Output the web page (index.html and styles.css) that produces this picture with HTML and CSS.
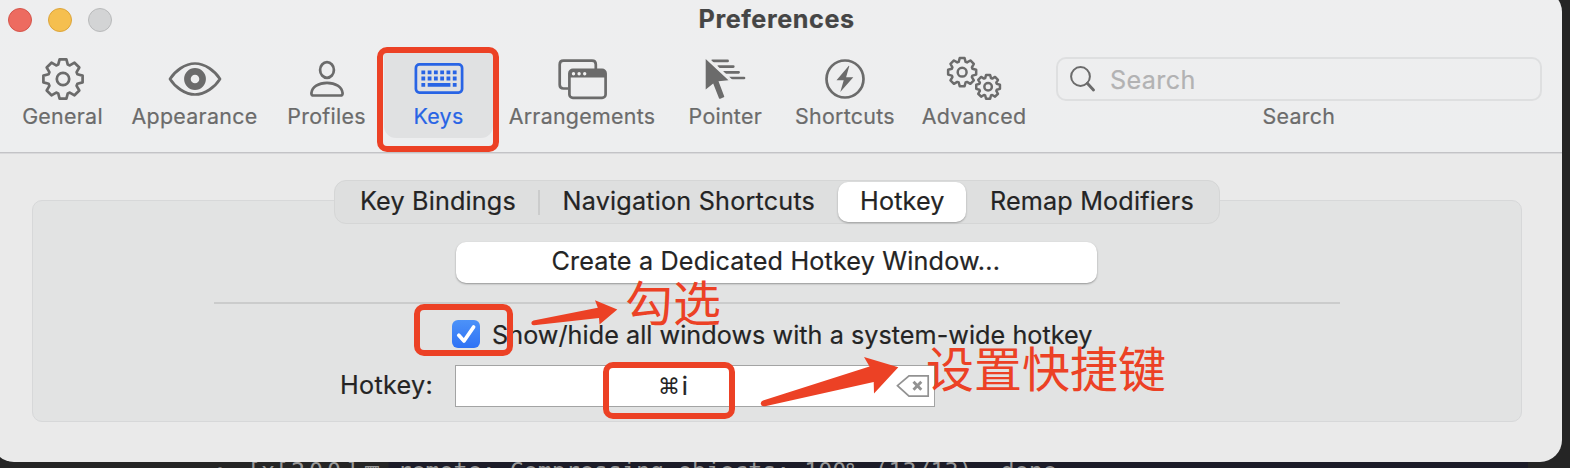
FILE: index.html
```html
<!DOCTYPE html>
<html lang="en">
<head>
<meta charset="utf-8">
<title>Preferences</title>
<link rel="stylesheet" href="styles.css">
</head>
<body>
<svg class="defs" width="0" height="0" aria-hidden="true">
  <symbol id="gear" viewBox="-22 -22 44 44" overflow="visible">
    <path vector-effect="non-scaling-stroke" d="M-4.8-14.4L-3.4-19.6H3.4L4.8-14.4 6.8-13.6 11.5-16.3 16.3-11.5 13.6-6.8 14.4-4.8 19.6-3.4V3.4L14.4 4.8 13.6 6.8 16.3 11.5 11.5 16.3 6.8 13.6 4.8 14.4 3.4 19.6H-3.4L-4.8 14.4-6.8 13.6-11.5 16.3-16.3 11.5-13.6 6.8-14.4 4.8-19.6 3.4V-3.4L-14.4-4.8-13.6-6.8-16.3-11.5-11.5-16.3-6.8-13.6Z"/>
    <circle vector-effect="non-scaling-stroke" r="6.2"/>
  </symbol>
</svg>

<div class="window">
  <header class="titlebar">
    <div class="lights"><i class="light close"></i><i class="light minimize"></i><i class="light zoom"></i></div>
    <h1 class="title">Preferences</h1>
  </header>

  <nav class="toolbar">
    <div class="item general">
      <svg class="icon" viewBox="-28 -24 56 48"><use href="#gear" x="-22" y="-22" width="44" height="44"/></svg>
      <span class="label">General</span>
    </div>
    <div class="item">
      <svg class="icon" viewBox="-28 -24 56 48"><path d="M-25 0C-20-8-10-15.5 0-15.5S20-8 25 0C20 8 10 15.5 0 15.5S-20 8-25 0Z"/><circle class="iris" r="7.6"/></svg>
      <span class="label">Appearance</span>
    </div>
    <div class="item">
      <svg class="icon" viewBox="-28 -24 56 48"><ellipse cy="-9" rx="6.9" ry="7.8"/><path d="M-13.5 16.5H13.5Q15.6 16.5 15.6 14.2C15 8 8.5 3.9 0 3.9S-15 8-15.6 14.2Q-15.6 16.5-13.5 16.5Z"/></svg>
      <span class="label">Profiles</span>
    </div>
    <div class="item selected">
      <svg class="icon" viewBox="-28 -24 56 48"><rect x="-23.1" y="-14.6" width="46.2" height="28.2" rx="3.5"/><path class="keycaps" stroke-dasharray="3.8 2.48" d="M-17.6-6.7H17.7M-17.6-.5H17.7"/><path class="keycaps" d="M-17.6 5.8h3.8M-11.3 5.8h22.7M13.8 5.8h3.8"/></svg>
      <span class="label">Keys</span>
    </div>
    <div class="item">
      <svg class="icon" viewBox="-28 -24 56 48"><path d="M-14 9.5H-18.5Q-22.3 9.5-22.3 5.7V-14.5Q-22.3-18.3-18.5-18.3H10Q13.8-18.3 13.8-14.5V-10"/><rect x="-12.6" y="-9.1" width="36.2" height="28" rx="3.5"/><path class="solid" d="M-12-7Q-12-9-10-9H21Q23-9 23-7V-1.5H-12Z"/><path class="dots" d="M-8.5-5.3h.01M-2.9-5.3h.01M2.7-5.3h.01"/></svg>
      <span class="label">Arrangements</span>
    </div>
    <div class="item">
      <svg class="icon" viewBox="-28 -24 56 48"><path class="solid" d="M-19.3-20L3.5 1.3-6.5 2.3-.8 17.2Q-.6 18-1.3 18.3L-4.7 19.8Q-5.6 20-6 19.2L-11.8 4.5-19.3 10.5Z"/><path stroke-linecap="round" d="M-12.5-18.1H2.6M-6.5-12.4H8.3M-.8-6.7H13.6M4.8-1H19"/><path class="halo" d="M-17.7-21L7.8 2.5"/></svg>
      <span class="label">Pointer</span>
    </div>
    <div class="item">
      <svg class="icon" viewBox="-28 -24 56 48"><circle r="18.5"/><path class="solid" d="M3.8-13.3L-8.5 1.2H-1.3L-4.7 13 8.3-1.8H1.1L4.3-13Z"/></svg>
      <span class="label">Shortcuts</span>
    </div>
    <div class="item">
      <svg class="icon thin" viewBox="-28 -24 56 48"><use href="#gear" x="-27.6" y="-22.6" width="31.5" height="31.5"/><use href="#gear" x=".8" y="-5.5" width="26.6" height="26.6"/></svg>
      <span class="label">Advanced</span>
    </div>
    <div class="search">
      <div class="searchbox">
        <svg class="lens" viewBox="0 0 28 30"><circle cx="11.5" cy="11.5" r="9.4"/><path stroke-width="2.9" d="M18.3 18.3L24.5 25"/></svg>
        <span class="placeholder">Search</span>
      </div>
      <span class="label">Search</span>
    </div>
  </nav>

  <main class="content">
    <div class="tabs">
      <span class="tab bindings">Key Bindings</span>
      <span class="tab navigation">Navigation Shortcuts</span>
      <span class="tab active">Hotkey</span>
      <span class="tab remap">Remap Modifiers</span>
    </div>
    <section class="panel">
      <div class="create">Create a Dedicated Hotkey Window...</div>
      <div class="rule"></div>
      <div class="check-row">
        <svg class="checkbox" viewBox="0 0 28 28"><path d="M6.8 15.3L12 21 21.6 7"/></svg>
        <span>Show/hide all windows with a system-wide hotkey</span>
      </div>
      <div class="field-row">
        <span class="field-label">Hotkey:</span>
        <div class="field">
          <span class="keys"><span class="command">⌘</span>i</span>
          <svg class="clear" viewBox="0 0 34 24"><path stroke-width="1.7" d="M1.5 11.7L13 1.9H32.2V22.1H13Z"/><path stroke-width="2.9" d="M17.5 7.8L25.3 15.8M25.3 7.8L17.5 15.8"/></svg>
        </div>
      </div>
    </section>
  </main>
</div>

<div class="terminal"><span class="bullet">•</span><span class="host">[x[</span><span class="count">200]</span><span class="cell">▥</span><span class="dash">-</span><span>remote: Compressing objects: 100% (13/13), done.</span></div>

<div class="mark mark-keys"></div>
<div class="mark mark-check"></div>
<div class="mark mark-hotkey"></div>
<svg class="arrows" viewBox="0 0 1570 468">
  <path d="M533.5 320.5L597.8 307.7 595 300.3 617.3 309.5 599.5 324.5 599 318 534 325.2Q531.5 325.3 531.3 323 531.4 321 533.5 320.5Z"/>
  <path d="M763 400.5L869.5 366.6 864 357 898.3 367.2 874 393.6 873.7 382 765 406.2Q761.3 406.8 760.7 403.8 760.7 401.3 763 400.5Z"/>
</svg>
<div class="note note-check" lang="zh-CN">勾选</div>
<div class="note note-hotkey" lang="zh-CN">设置快捷键</div>
</body>
</html>
```
FILE: styles.css
```css
* { box-sizing: border-box; }

body {
  margin: 0;
  height: 468px;
  overflow: hidden;
  position: relative;
  background: #252525;
  font: 25.2px/30px Inter, "Liberation Sans", sans-serif;
  letter-spacing: .16px;
  color: #242424;
  white-space: nowrap;
  -webkit-text-stroke: .2px;
}

.defs { position: absolute; }

/* The window is larger than the viewport on its top and left edges. */
.window {
  display: flex;
  flex-direction: column;
  width: 1570px;
  height: 472px;
  margin: -10px 0 0 -8px;
  padding: 10px 0 0 8px;
  border-radius: 22px;
  background: linear-gradient(#eeeeef 0, #edeeef 162px, #eaeaea 163px);
}

.titlebar {
  display: grid;
  grid-template-columns: 690px auto;
  height: 40px;
}

.lights {
  display: flex;
  gap: 16px;
  padding: 8px;
}

.light {
  width: 24px;
  height: 24px;
  border: 1px solid;
  border-radius: 50%;
}

.close { background: #ed6b60; border-color: #d5554b; }
.minimize { background: #f5bf4f; border-color: #dda53b; }
.zoom { background: #d3d4d5; border-color: #b9babb; }

.title {
  margin: 4px 0 0 8.5px;
  font-size: 25.2px;
  line-height: 30px;
  font-weight: 700;
  letter-spacing: .6px;
  color: #454545;
}

.toolbar {
  display: grid;
  grid-template-columns: 105px 159px 105px 114px 178px 108.6px 130.8px 127.2px auto;
  height: 113px;
  padding: 13px 0 0 10px;
  border-bottom: 1px solid #c3c3c6;
  box-shadow: 0 1px #d9d9db;
}

.item {
  display: flex;
  flex-direction: column;
  align-items: center;
  height: 85px;
  padding-top: 2px;
  color: #6b6b6b;
}

.selected {
  margin: 0 0 0 5px;
  width: 109px;
  border-radius: 0 0 12px 12px;
  background: #e0e1e2;
  color: #2864e5;
}

.icon {
  width: 56px;
  height: 48px;
  flex: none;
  overflow: visible;
  fill: none;
  stroke: currentColor;
  stroke-width: 2.7px;
  stroke-linejoin: round;
}

.icon .keycaps { stroke-width: 3.8px; }
.icon .iris { stroke-width: 6.6px; }
.icon .solid { fill: currentColor; stroke: none; }
.icon .dots { stroke: #f2f2f2; stroke-width: 3.4px; stroke-linecap: round; }
.icon .halo { stroke: #edeeee; stroke-width: 2px; }
.icon.thin { stroke-width: 2.5px; }

.label {
  font-size: 21.4px;
  line-height: 26px;
  letter-spacing: .28px;
}

.search {
  display: flex;
  flex-direction: column;
  align-items: center;
  gap: 2px;
  width: 485.5px;
  margin: 4px 0 0 18.5px;
  color: #6b6b6b;
}

.searchbox {
  display: flex;
  align-items: center;
  width: 485.5px;
  height: 44px;
  border: 2px solid #dedfe0;
  border-radius: 10px;
  padding-left: 11px;
}

.lens {
  width: 28px;
  height: 30px;
  margin-top: 2px;
  fill: none;
  stroke: #6b6b6b;
  stroke-width: 2px;
  stroke-linecap: round;
}

.placeholder {
  margin: 1px 0 0 13px;
  letter-spacing: .35px;
  color: #b2b2b3;
}

.content {
  display: flex;
  flex-direction: column;
  padding: 27px 40px 0 32px;
}

.tabs {
  z-index: 1;
  display: flex;
  align-items: center;
  width: 886px;
  height: 44px;
  margin-left: 302px;
  border: 1px solid #d5d6d6;
  border-radius: 12px;
  background: #dedfdf;
}

.tab { height: 25px; line-height: 23px; }
.bindings { width: 205px; padding-left: 25px; border-right: 2px solid #cbcccc; }
.navigation { width: 298px; padding-left: 22.5px; letter-spacing: .2px; }

.active {
  width: 128px;
  height: 40px;
  padding: 8px 0 0 22px;
  border-radius: 10px;
  background: #fff;
  box-shadow: 0 1px 2px #0000004d;
}

.remap { padding-left: 24px; }

.panel {
  width: 1490px;
  height: 222px;
  margin-top: -24px;
  padding-top: 41px;
  border: 1px solid #d7d8d9;
  border-radius: 10px;
  background: #e2e3e3;
}

.create {
  width: 641px;
  height: 41px;
  margin-left: 422.5px;
  padding: 4px 0 0 96px;
  border-radius: 10px;
  background: #fff;
  box-shadow: 0 1px 2px #00000059;
}

.rule {
  width: 1126px;
  height: 2px;
  margin: 19px 0 0 181px;
  background: #cbcccc;
}

.check-row {
  display: flex;
  gap: 12px;
  height: 30px;
  margin: 16px 0 0 419px;
  letter-spacing: .04px;
}

.checkbox {
  width: 28px;
  height: 28px;
  margin-top: 0;
  border-radius: 6px;
  background: linear-gradient(#4c92f8, #2f72f5);
  fill: none;
  stroke: #fff;
  stroke-width: 3.7px;
  stroke-linecap: round;
  stroke-linejoin: round;
}

.field-row {
  display: flex;
  margin: 15px 0 0 307px;
}

.field-label { width: 115px; padding-top: 4.5px; letter-spacing: .29px; }

.field {
  display: flex;
  justify-content: space-between;
  align-items: center;
  width: 480px;
  height: 42px;
  padding: 0 4px 0 202px;
  border: 1px solid #a3a4a4;
  background: #fff;
}

.keys { display: flex; gap: 1.5px; }
.command { font: 22px/31px "DejaVu Sans", sans-serif; -webkit-text-stroke: 0; }
.clear { width: 34px; height: 24px; fill: none; stroke: #929292; }

/* Output lines of the shell behind the window, visible below its edge. */
.terminal {
  position: absolute;
  left: 213px;
  top: 462px;
  display: grid;
  grid-template-columns: 34px 44px 74px 20px 12.5px auto;
  width: 1315px;
  height: 6px;
  overflow: hidden;
  font: 23.3px/18px "DejaVu Sans Mono", monospace;
  letter-spacing: 0;
  color: #9a9a9a;
  background: linear-gradient(90deg, #252525 175px, #1c1c28 176px);
  -webkit-text-stroke: 0;
}

.count { letter-spacing: 4px; }

.mark {
  position: absolute;
  border: 6px solid #ec4125;
  border-radius: 10px;
}

.mark-keys { left: 377px; top: 47px; width: 122px; height: 105px; }
.mark-check { left: 414px; top: 304px; width: 99px; height: 52px; }
.mark-hotkey { left: 603px; top: 362px; width: 132px; height: 57px; }

.arrows {
  position: absolute;
  left: 0;
  top: 0;
  width: 1570px;
  height: 468px;
  fill: #ec4125;
}

.note {
  position: absolute;
  font: 48px/60px "Noto Sans CJK SC", sans-serif;
  letter-spacing: 0;
  color: #ec4125;
  -webkit-text-stroke: 0;
}

.note-check { left: 625px; top: 270px; }
.note-hotkey { left: 926px; top: 336px; }
```
